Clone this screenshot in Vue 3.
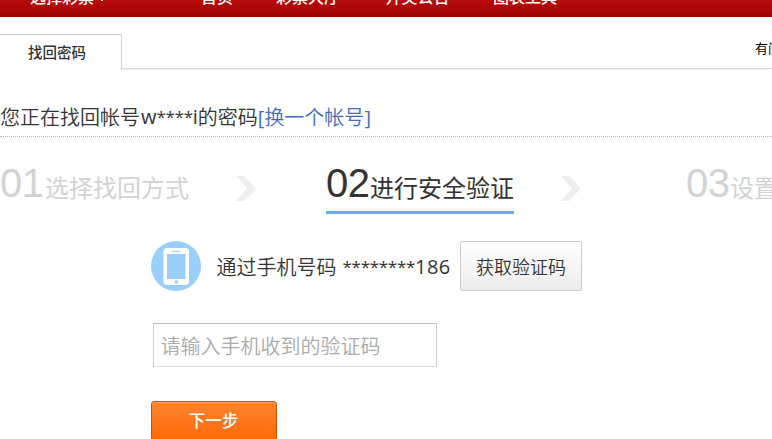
<script setup>
const nav = [
  { text: '首页', cls: 'home' },
  { text: '彩票大厅', cls: 'hall' },
  { text: '开奖公告', cls: 'news' },
  { text: '图表工具', cls: 'tools' }
]
</script>

<template>
  <div class="page">
    <nav class="nav">
      <span class="pick">选择彩票<svg class="caret" width="8" height="7" viewBox="0 0 8 7"><path d="M1.5 2.5 4 5 6.5 2.5" fill="none" stroke="#fff" /></svg></span>
      <span v-for="n in nav" :key="n.cls" :class="n.cls">{{ n.text }}</span>
    </nav>
    <div class="tabs">
      <div class="tab">找回密码</div>
      <div class="rest"><span>有问题？</span></div>
    </div>
    <div class="account">
      <span>您正在找回帐号</span><span class="lat">w</span><span class="lat stars">****</span><span class="lat">i</span><span class="after">的密码</span><a><span class="lat">[</span>换一个帐号<span class="lat">]</span></a>
    </div>
    <div class="steps">
      <div class="step"><b>01</b><span>选择找回方式</span></div>
      <svg class="arrow first" width="20" height="25" viewBox="0 0 20 25"><path d="M0 0H8L20 12.5 8 25H0L11 12.5Z" fill="#ededed" /></svg>
      <div class="step active"><b>02</b><span>进行安全验证</span></div>
      <svg class="arrow second" width="20" height="25" viewBox="0 0 20 25"><path d="M0 0H8L20 12.5 8 25H0L11 12.5Z" fill="#ededed" /></svg>
      <div class="step"><b>03</b><span>设置新密码</span></div>
    </div>
    <div class="phone">
      <svg width="50" height="50" viewBox="0 0 50 50">
        <circle cx="25" cy="25" r="25" fill="#99cefd" />
        <rect x="12.5" y="7" width="25.5" height="37" rx="3.5" fill="#fff" />
        <rect x="16" y="13" width="18.5" height="25" fill="#99cefd" />
        <path d="M21 10.5H29" stroke="#99cefd" stroke-linecap="round" />
        <circle cx="25.3" cy="41" r="1.8" fill="#99cefd" />
      </svg>
      <span class="label">通过手机号码</span>
      <span class="lat stars mask">********</span><span class="lat digits">186</span>
      <button class="code">获取验证码</button>
    </div>
    <input class="field" placeholder="请输入手机收到的验证码" />
    <button class="next">下一步</button>
  </div>
</template>

<style>
body {
  overflow: hidden;
  background: #fff;
}
</style>

<style scoped>
.page {
  width: 772px;
  height: 439px;
  overflow: hidden;
  color: #333;
  font-family: "Noto Sans CJK SC", sans-serif;
  font-size: 20px;
  font-weight: 350;
}
.page * {
  box-sizing: border-box;
  white-space: nowrap;
}
.nav {
  display: flex;
  align-items: flex-end;
  height: 17px;
  padding: 0 0 9px 30px;
  overflow: hidden;
  background: linear-gradient(#b90b0b, #9f0000);
  color: #fff;
  font-size: 16px;
  font-weight: 500;
  line-height: 24px;
}
.pick { width: 171px; }
.caret { margin-left: 4px; vertical-align: 0; }
.home { width: 75px; }
.hall { width: 109.5px; }
.news { width: 107.5px; }
.tabs {
  display: flex;
  height: 53px;
  padding-top: 17px;
}
.tab {
  width: 122px;
  padding-left: 28px;
  border: solid #ccc;
  border-width: 1px 1px 0 0;
  font-size: 14.5px;
  font-weight: 500;
  line-height: 33px;
}
.rest {
  flex: 1;
  height: 35px;
  padding-left: 633px;
  border-bottom: 1px solid #d9d9d9;
  box-shadow: 0 2px 2px -1px #eee;
  color: #000;
  font-size: 13px;
  font-weight: 400;
  line-height: 28px;
  overflow: hidden;
}
.account {
  display: flex;
  height: 67px;
  padding-top: 32px;
  border-bottom: 1px dotted #bbb;
  line-height: 30px;
}
.account > span:first-child { margin-right: 1px; }
.account a { color: #416cba; }
.lat { font-family: "Open Sans", "Noto Sans", sans-serif; font-weight: 400; }
.stars {
  font-size: 17px;
  letter-spacing: -0.3px;
}
.steps {
  display: flex;
  height: 77px;
  padding-top: 23px;
}
.step {
  display: flex;
  align-items: baseline;
  flex: none;
  height: 54px;
  color: #d1d3d3;
  font-size: 24px;
  line-height: 48px;
}
.step b {
  width: 44px;
  font-family: "Liberation Sans", sans-serif;
  font-size: 40px;
  font-weight: 400;
  letter-spacing: -0.4px;
  line-height: 46px;
}
.step:first-child b { width: 45px; }
.step span { font-weight: 400; }
.active {
  border-bottom: 3px solid #62aef4;
  color: #333;
}
.arrow { flex: none; margin-top: 16px; }
.first { margin-left: 47px; margin-right: 70px; }
.second { margin-left: 47px; margin-right: 105px; }
.phone {
  display: flex;
  align-items: center;
  margin: 27px 0 0 151px;
  height: 50px;
}
.label { width: 126px; margin-left: 15.5px; }
.mask { width: 72.5px; }
.digits { width: 36px; letter-spacing: 0.5px; }
.code {
  width: 122px;
  height: 50px;
  margin-left: 9px;
  padding: 0 0 1px;
  border: 1px solid #ccc;
  border-radius: 2px;
  background: linear-gradient(#fff, #ececec);
  color: #333;
  font: 350 18px "Noto Sans CJK SC", sans-serif;
}
.field {
  display: block;
  width: 284px;
  height: 44px;
  margin: 32px 0 0 153px;
  padding: 0 6.5px;
  border: 1px solid #ccc;
  border-top-color: #bbb;
  border-bottom-color: #ddd;
  font: 350 20px "Noto Sans CJK SC", sans-serif;
}
.field::placeholder { color: #aaa; }
.next {
  display: block;
  width: 126px;
  height: 40px;
  margin: 34px 0 0 151px;
  padding: 0 1px 3px 0;
  border: 1px solid #cb5206;
  border-radius: 3px;
  background: linear-gradient(#ff8530, #ff6905);
  box-shadow: inset 0 1px #ff9f5c;
  color: #fff;
  font: 500 16.5px "Noto Sans CJK SC", sans-serif;
}
</style>
